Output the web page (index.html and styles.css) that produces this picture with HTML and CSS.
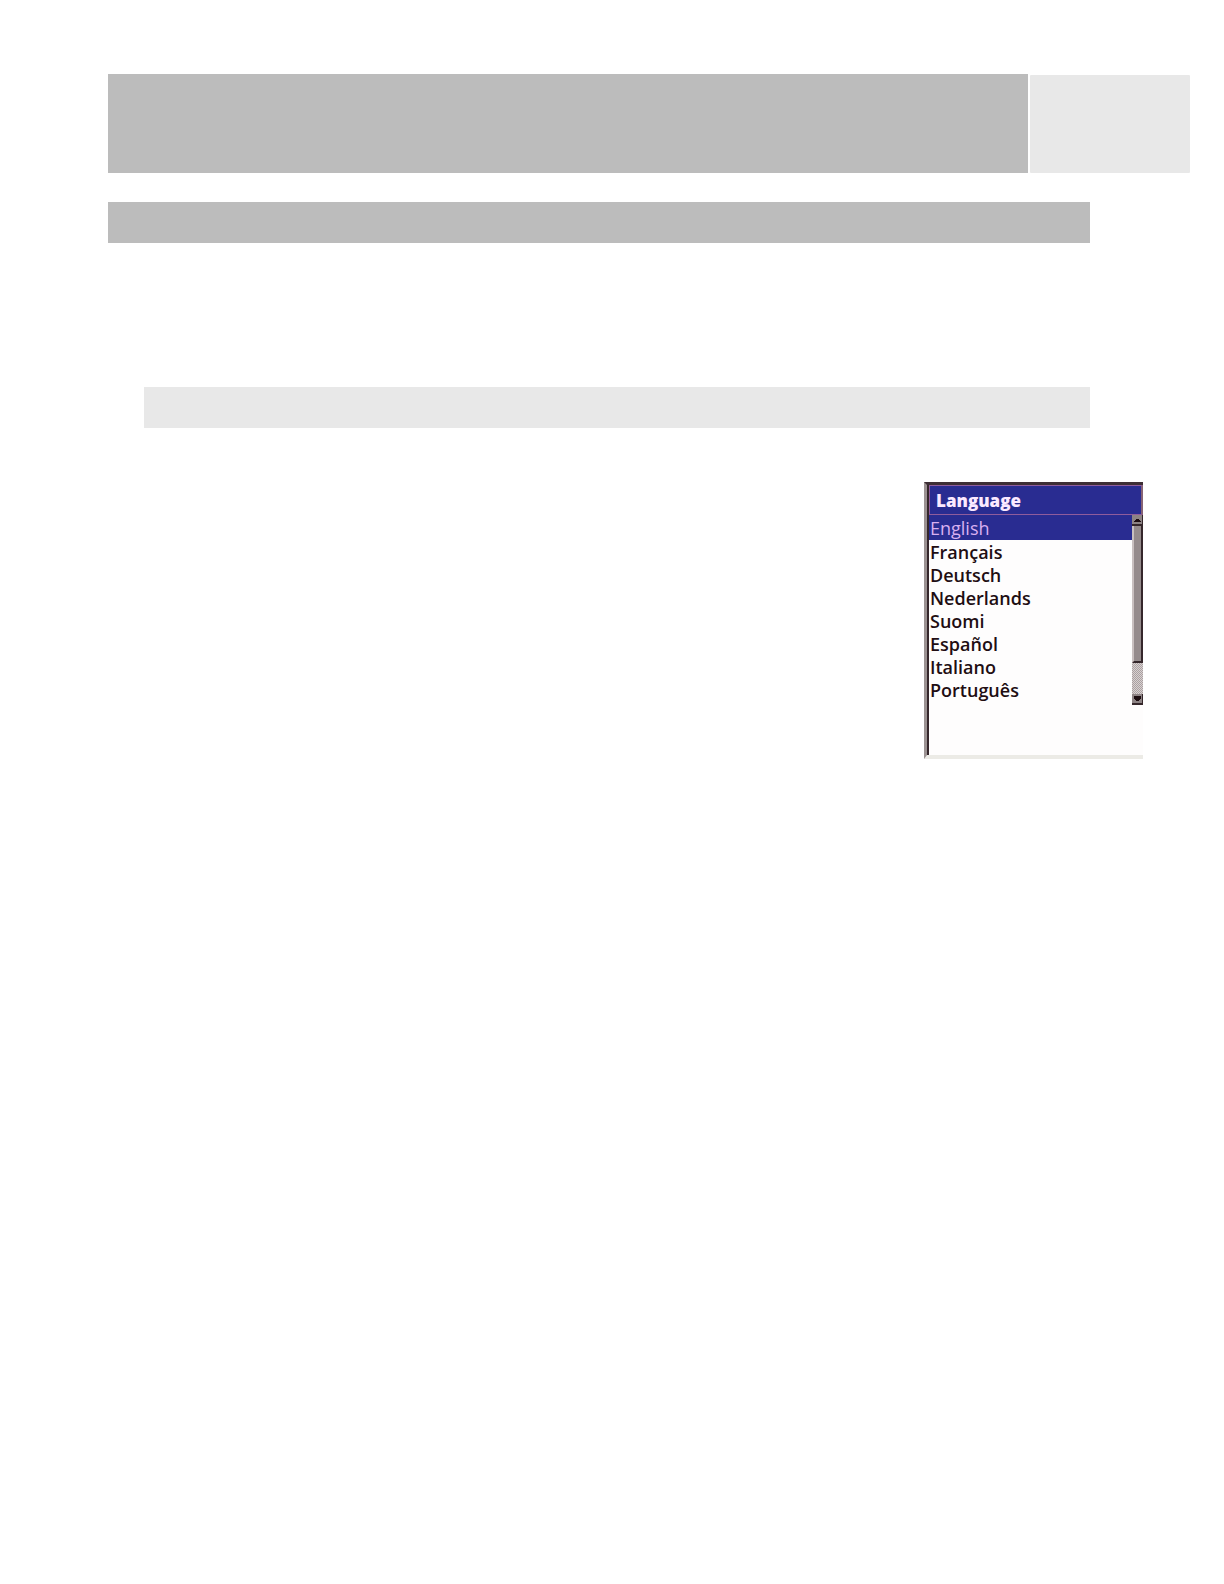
FILE: index.html
```html
<!DOCTYPE html>
<html lang="en">
<head>
<meta charset="utf-8">
<meta name="viewport" content="width=device-width, initial-scale=1">
<title>Language</title>
<link rel="stylesheet" href="styles.css">
</head>
<body>
<header class="masthead">
  <div class="masthead-title"></div>
  <div class="masthead-tab"></div>
</header>
<main class="content">
  <div class="section-bar"></div>
  <div class="subsection-bar"></div>
</main>
<section class="device">
  <label class="device-title" for="language">Language</label>
  <div class="device-body">
    <select class="languages" id="language" size="8">
      <option selected>English</option>
      <option>Français</option>
      <option>Deutsch</option>
      <option>Nederlands</option>
      <option>Suomi</option>
      <option>Español</option>
      <option>Italiano</option>
      <option>Português</option>
    </select>
    <div class="scroll" aria-hidden="true">
      <svg class="arrow" viewBox="0 0 11 11"><path d="M0 0H11V11H0Z" fill="#8d8384"/><path d="M1 7H2V6H3V5H4V4H7V5H8V6H9V7Z" fill="#1c0c10"/><path d="M0 9H11V11H0ZM10 0H11V11H10Z" fill="#35272b"/></svg>
      <div class="thumb"></div>
      <div class="track"></div>
      <svg class="arrow" viewBox="0 0 11 11"><path d="M0 0H11V11H0Z" fill="#8d8384"/><path d="M2 2H9V5H8V6H7V7H4V6H3V5H2Z" fill="#1c0c10"/><path d="M0 9H11V11H0ZM10 0H11V11H10Z" fill="#35272b"/></svg>
    </div>
  </div>
</section>
</body>
</html>
```
FILE: styles.css
```css
* {
  box-sizing: border-box;
}

body {
  margin: 0;
  padding: 74px 34px 80px 108px;
  background: #fff;
  font-family: "Comic Sans MS", "Open Sans", sans-serif;
}

.masthead {
  display: flex;
  gap: 2px;
  min-height: 99px;
}

.masthead-title {
  flex: 1;
  background: #bcbcbc;
}

.masthead-tab {
  width: 160px;
  margin-top: 1px;
  border-radius: 1px;
  background: #e8e8e8;
}

.content {
  padding: 29px 100px 0 0;
}

.section-bar {
  height: 41px;
  background: #bcbcbc;
}

.subsection-bar {
  height: 41px;
  margin: 144px 0 0 36px;
  background: #e8e8e8;
}

.device {
  width: 219px;
  min-height: 277px;
  margin: 54px 47px 0 auto;
  padding: 0 0 0 2px;
  border-top: 3px solid #3d2e35;
  border-left: 3px solid #9b9292;
  border-bottom: 4px solid #ecebe6;
  background: linear-gradient(to right, #35272b 2px, #fefdfd 2px);
}

.device-title {
  display: block;
  height: 30px;
  padding: 0 0 0 6px;
  border: 1px solid #8f5c9c;
  border-right: 2px solid #876374;
  background: #292c91;
  color: #fbe9ff;
  font-size: 17px;
  font-weight: 800;
  line-height: 30px;
}

.device-body {
  display: flex;
}

.languages {
  flex: 1;
  min-width: 0;
  height: 190px;
  margin: 0;
  padding: 0;
  border: 0;
  border-radius: 0;
  outline: 0;
  overflow: hidden;
  background: #fefdfd;
  font: 600 18px/23px "Comic Sans MS", "Open Sans", sans-serif;
}

.languages option {
  height: 23px;
  min-height: 23px;
  padding: 0 1px;
  color: #210d12;
  font-weight: 600;
  line-height: 23px;
}

.languages option:checked {
  height: 25px;
  padding-top: 1px;
  background: linear-gradient(#292c91, #292c91);
  font-weight: 500;
  -webkit-text-fill-color: #d9b0f0;
}

.scroll {
  display: flex;
  flex-direction: column;
  width: 11px;
  height: 190px;
}

.arrow {
  width: 11px;
  height: 11px;
}

.thumb {
  height: 137px;
  border-left: 2px solid #c9c0c0;
  border-right: 2px solid #35272b;
  border-bottom: 2px solid #35272b;
  background: #958b8c;
}

.track {
  flex: 1;
  background: repeating-conic-gradient(#aaa0a1 0 25%, #d8d1d1 0 50%) 0 0 / 2px 2px;
}
```
